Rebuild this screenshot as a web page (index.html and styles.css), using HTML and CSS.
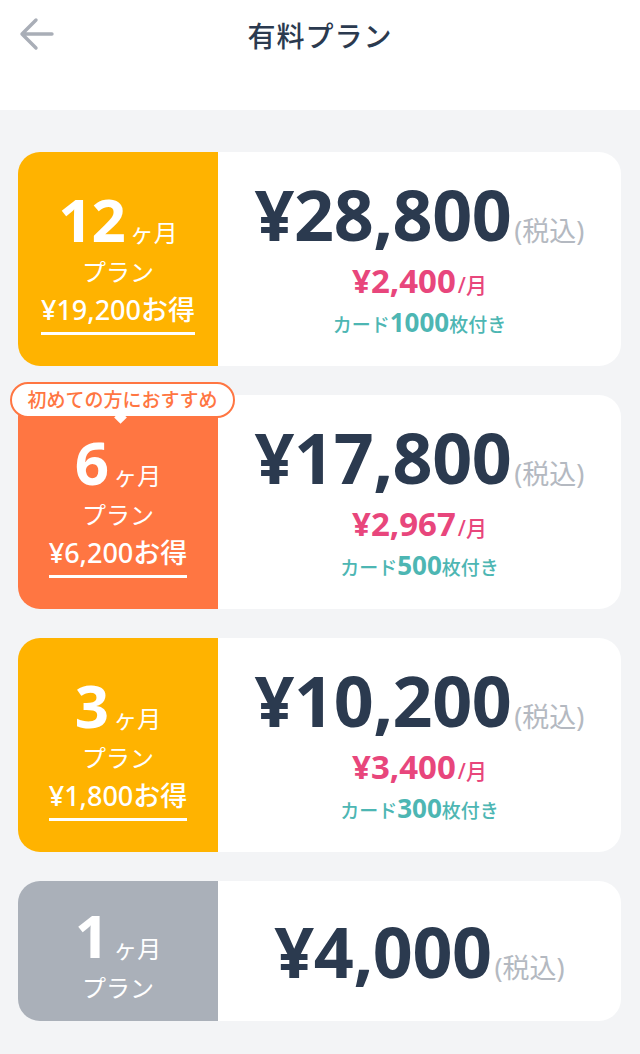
FILE: index.html
```html
<!DOCTYPE html>
<html lang="ja">
<head>
    <meta charset="UTF-8">
    <meta name="viewport" content="width=device-width, initial-scale=1.0">
    <title>有料プラン</title>
    <link rel="stylesheet" href="styles.css">
</head>
<body>
    <header class="topbar">
        <a class="back" href="#">
            <svg width="36" height="36" viewBox="0 0 36 36">
                <path d="M34 17H4M18 3L4 17l14 14" fill="none" stroke="#a9aeb7" stroke-width="3.4" stroke-linecap="round" stroke-linejoin="round"/>
            </svg>
        </a>
        <h1>有料プラン</h1>
    </header>

    <main class="plans">
        <div class="plan">
            <div class="term yellow">
                <div class="months"><span class="num">12</span><span class="unit">ヶ月</span></div>
                <div class="label">プラン</div>
                <div class="save">¥19,200お得</div>
            </div>
            <div class="price">
                <div class="total">¥28,800<span class="tax">(税込)</span></div>
                <div class="monthly">¥2,400<span class="per">/月</span></div>
                <div class="cards">カード<b>1000</b>枚付き</div>
            </div>
        </div>

        <div class="plan">
            <div class="badge">初めての方におすすめ</div>
            <div class="term orange">
                <div class="months"><span class="num">6</span><span class="unit">ヶ月</span></div>
                <div class="label">プラン</div>
                <div class="save">¥6,200お得</div>
            </div>
            <div class="price">
                <div class="total">¥17,800<span class="tax">(税込)</span></div>
                <div class="monthly">¥2,967<span class="per">/月</span></div>
                <div class="cards">カード<b>500</b>枚付き</div>
            </div>
        </div>

        <div class="plan">
            <div class="term yellow">
                <div class="months"><span class="num">3</span><span class="unit">ヶ月</span></div>
                <div class="label">プラン</div>
                <div class="save">¥1,800お得</div>
            </div>
            <div class="price">
                <div class="total">¥10,200<span class="tax">(税込)</span></div>
                <div class="monthly">¥3,400<span class="per">/月</span></div>
                <div class="cards">カード<b>300</b>枚付き</div>
            </div>
        </div>

        <div class="plan short">
            <div class="term gray">
                <div class="months"><span class="num">1</span><span class="unit">ヶ月</span></div>
                <div class="label">プラン</div>
            </div>
            <div class="price">
                <div class="total">¥4,000<span class="tax">(税込)</span></div>
            </div>
        </div>
    </main>
</body>
</html>
```

FILE: styles.css
```css
body {
    margin: 0;
    font-family: "Noto Sans", "Noto Sans CJK JP", sans-serif;
    background-color: #f3f4f6;
    color: #2b3a4f;
}
.topbar {
    height: 110px;
    background-color: #ffffff;
    position: relative;
    display: flex;
    justify-content: center;
}
.back {
    position: absolute;
    left: 18px;
    top: 17px;
    display: block;
    line-height: 0;
}
.topbar h1 {
    margin: 0;
    padding-top: 16px;
    font-size: 28px;
    font-weight: 500;
    line-height: 40px;
    letter-spacing: 1px;
}
.plans {
    padding: 42px 19px 30px 18px;
    display: flex;
    flex-direction: column;
    gap: 29px;
}
.plan {
    position: relative;
    display: flex;
    height: 214px;
}
.plan.short {
    height: 140px;
}
.term {
    width: 200px;
    flex-shrink: 0;
    border-radius: 22px 0 0 22px;
    color: #ffffff;
    display: flex;
    flex-direction: column;
    align-items: center;
    justify-content: center;
}
.yellow { background-color: #ffb300; }
.orange { background-color: #ff7642; }
.gray { background-color: #aab0b9; }
.months {
    display: flex;
    align-items: baseline;
    line-height: 1;
    margin-top: 6px;
}
.num {
    font-size: 60px;
    font-weight: 700;
    letter-spacing: -1px;
}
.unit {
    font-size: 24px;
    margin-left: 5px;
}
.label {
    font-size: 24px;
    line-height: 30px;
    margin-top: 8px;
}
.save {
    font-size: 27px;
    font-weight: 500;
    line-height: 34px;
    margin-top: 6px;
    padding-bottom: 5px;
    border-bottom: 3px solid #ffffff;
}
.price {
    flex: 1;
    background-color: #ffffff;
    border-radius: 0 22px 22px 0;
    display: flex;
    flex-direction: column;
    align-items: center;
    justify-content: center;
}
.total {
    font-size: 70px;
    font-weight: 700;
    line-height: 76px;
    letter-spacing: -0.5px;
}
.tax {
    font-size: 27px;
    font-weight: 400;
    line-height: 1;
    color: #b4b9c1;
    letter-spacing: 0;
    margin-left: 3px;
}
.monthly {
    font-size: 33px;
    font-weight: 700;
    color: #e8467c;
    line-height: 40px;
    margin-top: 9px;
}
.per {
    font-size: 21px;
    font-weight: 500;
    line-height: 1;
    margin-left: 2px;
}
.cards {
    font-size: 19px;
    font-weight: 500;
    color: #4db6b3;
    line-height: 34px;
    margin-top: 7px;
}
.cards b {
    font-size: 26px;
    font-weight: 700;
    line-height: 1;
}
.badge {
    position: absolute;
    left: -8px;
    top: -13px;
    width: 221px;
    height: 32px;
    border: 2px solid #ff7642;
    border-radius: 18px;
    background-color: #ffffff;
    color: #ff7642;
    font-size: 19px;
    font-weight: 500;
    line-height: 32px;
    text-align: center;
    z-index: 1;
}
.badge::after {
    content: "";
    position: absolute;
    left: 104px;
    bottom: -6px;
    width: 9px;
    height: 9px;
    background-color: #ffffff;
    transform: rotate(45deg);
}
```
